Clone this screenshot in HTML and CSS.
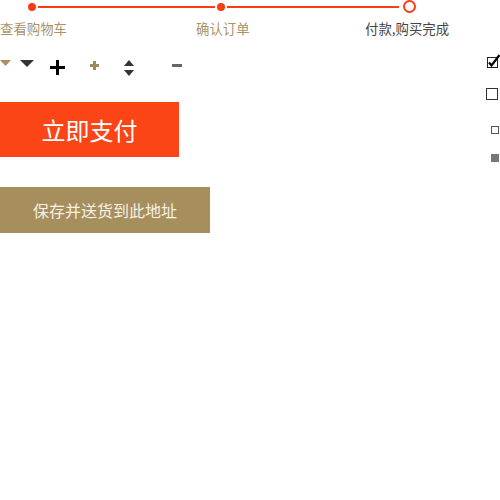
FILE: index.html
```html
<!DOCTYPE html>
<html>
<head>
<meta charset="utf-8">
<link rel="stylesheet" href="styles.css">
</head>
<body>
<div class="page">
  <div class="main">
    <div class="steps">
      <span class="dot"></span>
      <span class="line line-a"></span>
      <span class="dot"></span>
      <span class="line line-b"></span>
      <span class="ring"></span>
    </div>
    <div class="labels">
      <span class="label l1">查看购物车</span>
      <span class="label l2">确认订单</span>
      <span class="label l3">付款,购买完成</span>
    </div>
    <div class="icons">
      <svg class="i-tri-tan" width="11" height="6" viewBox="0 0 11 6"><polygon points="0,0 11,0 5.5,6" fill="#a8915e"/></svg>
      <svg class="i-tri-dark" width="14" height="7" viewBox="0 0 14 7"><polygon points="0,0 14,0 7,7" fill="#333"/></svg>
      <svg class="i-plus" width="15" height="15" viewBox="0 0 15 15"><rect x="6" y="0" width="3" height="15" fill="#000"/><rect x="0" y="6" width="15" height="3" fill="#000"/></svg>
      <svg class="i-plus-tan" width="9" height="9" viewBox="0 0 9 9"><rect x="3" y="0" width="3" height="9" fill="#a08a5a"/><rect x="0" y="3" width="9" height="3" fill="#a08a5a"/></svg>
      <svg class="i-updown" width="10" height="16" viewBox="0 0 10 16"><polygon points="5,0 10,6 0,6" fill="#333"/><polygon points="0,10 10,10 5,16" fill="#333"/></svg>
      <svg class="i-minus" width="10" height="3" viewBox="0 0 10 3"><rect x="0" y="0" width="10" height="3" fill="#666"/></svg>
    </div>
    <div class="btn btn-pay">立即支付</div>
    <div class="btn btn-save">保存并送货到此地址</div>
  </div>
  <div class="side">
    <svg class="cb-checked" width="14" height="14" viewBox="0 0 14 14">
      <rect x="1.5" y="3.5" width="10" height="10" fill="#fff" stroke="#222" stroke-width="1"/>
      <path d="M3 8.5 L5.5 11.5 L13.5 1" fill="none" stroke="#000" stroke-width="2.2"/>
    </svg>
    <span class="cb"></span>
    <span class="cb-small"></span>
    <span class="sq-gray"></span>
  </div>
</div>
</body>
</html>
```
FILE: styles.css
```css
html, body {
  margin: 0;
  padding: 0;
  background: #fff;
}
body {
  font-family: "Noto Sans CJK SC", "Noto Sans", sans-serif;
}
.page {
  display: flex;
  justify-content: space-between;
  width: 500px;
}
.main {
  display: flex;
  flex-direction: column;
  width: 470px;
}
.steps {
  display: flex;
  align-items: center;
  height: 13px;
  padding-left: 28px;
}
.dot {
  width: 8px;
  height: 8px;
  border-radius: 50%;
  background: #fa3b14;
  flex: none;
}
.line {
  height: 2px;
  background: #fa3b14;
  flex: none;
}
.line-a {
  width: 177px;
  margin: 0 2px 0 2px;
}
.line-b {
  width: 172px;
  margin: 0 4px 0 2px;
}
.ring {
  width: 9px;
  height: 9px;
  border: 2px solid #fa3b14;
  border-radius: 50%;
  flex: none;
}
.labels {
  display: flex;
  margin-top: 6px;
  font-size: 13.4px;
  line-height: 18px;
  white-space: nowrap;
}
.label {
  flex: none;
}
.label.l1 {
  width: 196px;
  color: #a8946a;
}
.label.l2 {
  width: 169px;
  color: #a8946a;
}
.label.l3 {
  color: #444;
}
.icons {
  display: flex;
  align-items: flex-start;
  height: 16px;
  margin-top: 23px;
}
.icons svg {
  display: block;
  flex: none;
}
.i-tri-dark {
  margin-left: 9px;
}
.i-plus {
  margin-left: 16px;
}
.i-plus-tan {
  margin-left: 25px;
  margin-top: 1px;
}
.i-updown {
  margin-left: 25px;
}
.i-minus {
  margin-left: 38px;
  margin-top: 4px;
}
.btn {
  display: flex;
  align-items: center;
  justify-content: center;
  color: #fff;
}
.btn-pay {
  width: 179px;
  height: 55px;
  margin-top: 26px;
  background: #fc4517;
  font-size: 24px;
}
.btn-save {
  width: 210px;
  height: 46px;
  margin-top: 30px;
  background: #a68f5c;
  font-size: 16px;
  color: #f6f1e8;
}
.side {
  display: flex;
  flex-direction: column;
  align-items: flex-start;
  width: 14px;
  padding-top: 54px;
}
.cb-checked {
  display: block;
}
.cb {
  display: block;
  width: 10px;
  height: 10px;
  border: 1px solid #333;
  margin-top: 20px;
}
.cb-small {
  display: block;
  width: 6px;
  height: 6px;
  border: 1px solid #555;
  margin-top: 26px;
  margin-left: 5px;
}
.sq-gray {
  display: block;
  width: 8px;
  height: 8px;
  background: #777;
  margin-top: 20px;
  margin-left: 5px;
}
```
